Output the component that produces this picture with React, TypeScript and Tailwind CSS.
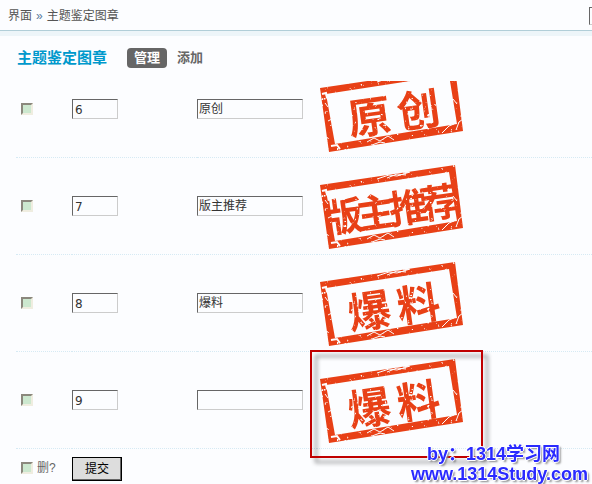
import { useState } from 'react';

interface StampGlyph {
  text: string;
  x: number;
  y: number;
  size: number;
}

interface StampRow {
  order: number;
  name: string;
  glyphs: StampGlyph[];
  selected?: boolean;
}

const baoliao: StampGlyph[] = [
  { text: '爆', x: 52, y: 53, size: 43 },
  { text: '料', x: 101, y: 46, size: 43 },
];

const rows: StampRow[] = [
  {
    order: 6,
    name: '原创',
    glyphs: [
      { text: '原', x: 52, y: 53, size: 43 },
      { text: '创', x: 101, y: 46, size: 43 },
    ],
  },
  {
    order: 7,
    name: '版主推荐',
    glyphs: [
      { text: '版', x: 26, y: 56, size: 39 },
      { text: '主', x: 58, y: 52, size: 39 },
      { text: '推', x: 91, y: 47, size: 39 },
      { text: '荐', x: 122, y: 42, size: 39 },
    ],
  },
  { order: 8, name: '爆料', glyphs: baoliao },
  { order: 9, name: '', glyphs: baoliao, selected: true },
];

function Stamp({ id, glyphs }: { id: string; glyphs: StampGlyph[] }) {
  return (
    <svg width="150" height="96" viewBox="0 0 150 96" className="block">
      <defs>
        {/* Worn ink: noise is cut out of the artwork */}
        <filter id={id} x="0" y="0" width="150" height="96" filterUnits="userSpaceOnUse">
          <feTurbulence type="fractalNoise" baseFrequency="0.3" numOctaves="2" seed="6" />
          <feColorMatrix values="0 0 0 0 0  0 0 0 0 0  0 0 0 0 0  8 0 0 0 -5.4" result="wear" />
          <feComposite in="SourceGraphic" in2="wear" operator="out" />
        </filter>
      </defs>
      <g filter={`url(#${id})`} fill="#e84115">
        <path fillRule="evenodd" d="M3 27 138 7 146 70 12 91ZM9 33 18 83 140 63 132 14Z" />
        {glyphs.map((glyph) => (
          <text
            key={glyph.text}
            x={glyph.x}
            y={glyph.y}
            fontSize={glyph.size}
            textAnchor="middle"
            dominantBaseline="central"
            transform={`rotate(-8 ${glyph.x} ${glyph.y})`}
            className="font-['Noto_Sans_CJK_SC',sans-serif] font-bold"
          >
            {glyph.text}
          </text>
        ))}
      </g>
      <g fill="none" stroke="#fcfdff">
        <path d="M60 21 72 17 80 18 93 14M70 20l10-4 9 1M86 15l6-1" strokeWidth="1" />
        <path d="M50 81l7-4 6 3 8-5 6 4M55 84l8-3 5 1" strokeWidth="1" />
        <path d="M125 72l7-7 5-2M139 69l3-8 4-3M136 38l4 5M8 42l3 4M11 60l4-2" strokeWidth="1" />
        <path d="M5 33l4-1 1 5M14 85l6-1 3 4" strokeWidth="2" />
      </g>
    </svg>
  );
}

function Checkbox({ label }: { label: string }) {
  return (
    <input
      type="checkbox"
      aria-label={label}
      className="block size-3 shrink-0 appearance-none border-2 border-t-[#8b887d] border-l-[#8b887d] border-r-[#efede0] border-b-[#efede0] bg-[#cce8cf] bg-clip-border checked:bg-[#6fa876]"
    />
  );
}

const fieldClass =
  'block h-5 border border-t-[#666] border-l-[#666] border-r-[#ccc] border-b-[#ccc] bg-transparent text-[#333] outline-none';

function StampTableRow({ row }: { row: StampRow }) {
  const [order, setOrder] = useState(String(row.order));
  const [name, setName] = useState(row.name);

  return (
    <tr>
      <td className="py-0 pl-[5px]">
        <Checkbox label={`删除 ${row.order}`} />
      </td>
      <td className="p-0">
        <input
          type="text"
          aria-label="显示顺序"
          value={order}
          onChange={(e) => setOrder(e.target.value)}
          className={`${fieldClass} w-[46px] px-0.5 pt-0.5 font-['DejaVu_Sans',sans-serif] text-xs`}
        />
      </td>
      <td className="p-0">
        <input
          type="text"
          aria-label="图章名称"
          value={name}
          onChange={(e) => setName(e.target.value)}
          className={`${fieldClass} w-[106px] px-px pb-1 text-xs`}
        />
      </td>
      <td className="relative p-0">
        <Stamp id={`wear-${row.order}`} glyphs={row.glyphs} />
        {row.selected && (
          <div className="pointer-events-none absolute -top-0.5 -left-[7px] h-[108px] w-[173px] border-2 border-[#c00000] drop-shadow-[5px_5px_2px_rgba(0,0,0,0.45)]" />
        )}
      </td>
    </tr>
  );
}

export default function App() {
  return (
    <div className="min-h-screen overflow-hidden bg-[#fcfdff] font-['Liberation_Sans','Noto_Sans_CJK_SC',sans-serif] text-xs text-[#555]">
      <header className="relative z-10 bg-[#fcfdff]">
        <div className="flex h-[31px] items-center justify-between border-b border-[#b1ced8] pt-0.5 pl-2">
          <nav className="flex items-center gap-1">
            <a href="#ui">界面</a>
            <span className="text-[#57799b]">»</span>
            <span>主题鉴定图章</span>
          </nav>
          <input
            type="search"
            aria-label="搜索"
            className="-mr-32 h-[18px] w-[131px] border border-t-[#666] border-l-[#666] border-r-[#ccc] border-b-[#ccc] outline-none"
          />
        </div>
        <div className="h-[5px] bg-[#edf5f9]" />
        <div className="flex h-11 items-center gap-5 pl-[17px]">
          <h1 className="text-[15px] font-bold text-[#0099cc]">主题鉴定图章</h1>
          <div className="flex items-center gap-2.5 text-[13px] leading-5 font-bold">
            <a href="#manage" className="rounded bg-[#666] px-[7px] text-white">
              管理
            </a>
            <a href="#add" className="text-[#666]">
              添加
            </a>
          </div>
        </div>
        <div className="h-px" />
      </header>

      <form className="-mt-5 pl-4" onSubmit={(e) => e.preventDefault()}>
        <table className="w-full table-fixed border-separate border-spacing-0 [&_tr:not(:last-child)>td]:border-b [&_tr:not(:last-child)>td]:border-dotted [&_tr:not(:last-child)>td]:border-[#d6eaf4]">
          <colgroup>
            <col className="w-14" />
            <col className="w-[125px]" />
            <col className="w-[120px]" />
            <col />
          </colgroup>
          <tbody>
            {rows.map((row) => (
              <StampTableRow key={row.order} row={row} />
            ))}
            <tr>
              <td className="pt-2 pb-2.5 pl-[5px]">
                <label className="flex items-center gap-1 text-[#666]">
                  <Checkbox label="删?" />
                  删?
                </label>
              </td>
              <td colSpan={3} className="py-2">
                <button
                  type="submit"
                  className="block h-6 border border-black bg-[#ddd] px-3 text-black shadow-[inset_-1px_-1px_0_#666]"
                >
                  提交
                </button>
              </td>
            </tr>
          </tbody>
        </table>
      </form>

      <div className="pointer-events-none fixed right-1 bottom-0 z-20 flex flex-col items-start text-lg leading-5 font-bold text-[#2a2aff] [text-shadow:1px_0_#fff,-1px_0_#fff,0_1px_#fff,0_-1px_#fff,2px_2px_2px_#888]">
        <span className="pl-4">by：1314学习网</span>
        <span>www.1314Study.com</span>
      </div>
    </div>
  );
}
